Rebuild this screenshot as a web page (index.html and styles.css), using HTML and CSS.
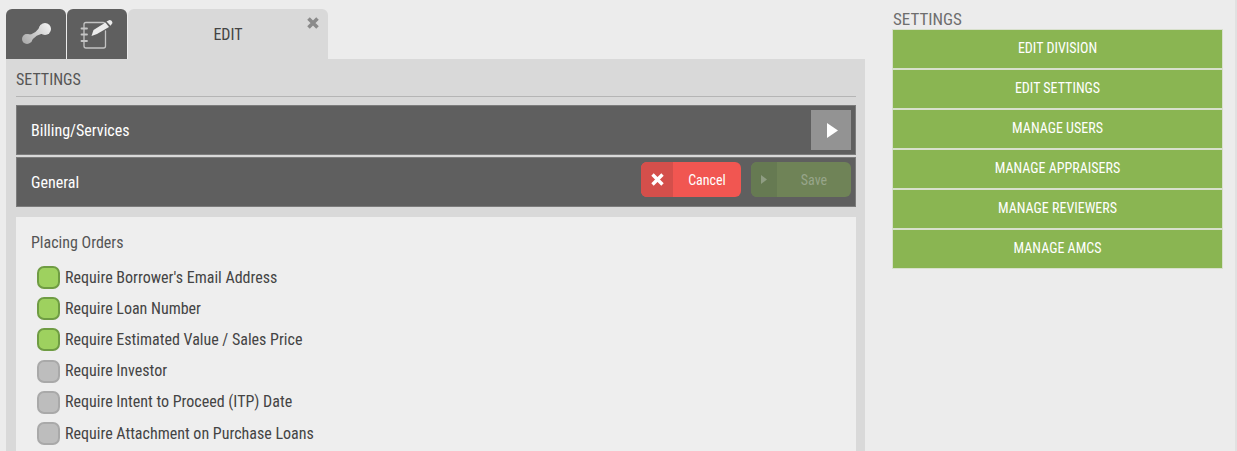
FILE: index.html
```html
<!DOCTYPE html>
<html lang="en">
<head>
<meta charset="utf-8">
<title>Settings</title>
<link rel="stylesheet" href="styles.css">
</head>
<body>
<div class="page">
  <main class="main">
    <div class="tabs">
      <div class="tab tab-icon">
        <svg width="36" height="24" viewBox="0 0 36 24"><defs><linearGradient id="link" gradientUnits="userSpaceOnUse" x1="5" y1="22" x2="32" y2="2"><stop offset="0" stop-color="#a8a8a8"/><stop offset="1" stop-color="#f2f2f2"/></linearGradient></defs><g fill="url(#link)"><circle cx="9" cy="17" r="5"/><circle cx="27" cy="7" r="6"/><path d="M6.500 12.700Q18 14 22.500 3L31 11.500Q17 10.500 13 20.500z"/></g></svg>
      </div>
      <div class="tab tab-icon">
        <svg width="36" height="36" viewBox="0 0 36 36" fill="none" stroke="#c4c4c4" stroke-width="1.300" stroke-linecap="round"><path d="M26 9V8.500a2 2 0 0 0-2-2H7a2 2 0 0 0-2 2V30a2 2 0 0 0 2 2h17.500a2 2 0 0 0 2-2V15"/><path d="M2.500 12.500h5.500M2.500 18.500h5.500M2.500 25h5.500" stroke-width="1.800"/><path d="M12.500 20l2-6 12-7.500 3.500 4.500-12 7z" fill="#ececec" stroke="none"/><path d="M27.500 5.500l3-1.500q2.500 0 3 3l-2 2.800z" fill="#ececec" stroke="none"/></svg>
      </div>
      <div class="tab tab-active">
        <span>EDIT</span>
        <svg class="tab-close" width="14" height="14" viewBox="0 0 14 14"><path d="M2.500 2.500l9 9M11.500 2.500l-9 9" stroke="#8a8a8a" stroke-width="3.600" fill="none"/></svg>
      </div>
    </div>
    <section class="panel">
      <h2 class="panel-title">SETTINGS</h2>
      <div class="bar bar-first">
        <span class="bar-label">Billing/Services</span>
        <button class="play" type="button"><svg width="11" height="15" viewBox="0 0 11 15"><path d="M0 0l11 7.500-11 7.500z" fill="#fff"/></svg></button>
      </div>
      <div class="bar">
        <span class="bar-label">General</span>
        <div class="bar-actions">
          <div class="btn btn-cancel">
            <span class="btn-icon"><svg width="13" height="13" viewBox="0 0 13 13"><path d="M1.500 1.500l10 10M11.500 1.500l-10 10" stroke="#fff" stroke-width="3.400" fill="none"/></svg></span>
            <span class="btn-text">Cancel</span>
          </div>
          <div class="btn btn-save">
            <span class="btn-icon"><svg width="6" height="9" viewBox="0 0 6 9"><path d="M0 0l6 4.500-6 4.500z" fill="#8f9d83"/></svg></span>
            <span class="btn-text">Save</span>
          </div>
        </div>
      </div>
      <div class="card">
        <h3 class="card-title">Placing Orders</h3>
        <ul class="checks">
          <li class="check on"><span class="box"></span>Require Borrower's Email Address</li>
          <li class="check on"><span class="box"></span>Require Loan Number</li>
          <li class="check on"><span class="box"></span>Require Estimated Value / Sales Price</li>
          <li class="check"><span class="box"></span>Require Investor</li>
          <li class="check"><span class="box"></span>Require Intent to Proceed (ITP) Date</li>
          <li class="check"><span class="box"></span>Require Attachment on Purchase Loans</li>
        </ul>
      </div>
    </section>
  </main>
  <aside class="side">
    <h2 class="side-title">SETTINGS</h2>
    <a class="side-btn">EDIT DIVISION</a>
    <a class="side-btn">EDIT SETTINGS</a>
    <a class="side-btn">MANAGE USERS</a>
    <a class="side-btn">MANAGE APPRAISERS</a>
    <a class="side-btn">MANAGE REVIEWERS</a>
    <a class="side-btn">MANAGE AMCS</a>
  </aside>
</div>
</body>
</html>
```
FILE: styles.css
```css
* { box-sizing: border-box; }
html, body { margin: 0; height: 451px; overflow: hidden; }
html { border-right: 2px solid #e1e1e1; }
body { background: #ececec; font-family: "Roboto Condensed", Roboto, sans-serif; font-stretch: 75%; color: #555; }
.page { display: flex; align-items: flex-start; padding: 9px 0 0 6px; height: 451px; overflow: hidden; }
.main { width: 859px; flex: none; }
.tabs { display: flex; height: 50px; gap: 1px; }
.tab { border-radius: 6px 6px 0 0; display: flex; align-items: center; justify-content: center; }
.tab-icon { width: 60px; background: #5f5f5f; }
.tab-active { width: 200px; background: #d9d9d9; position: relative; font-size: 16px; color: #444; }
.tab-close { position: absolute; top: 7px; right: 8px; }
.panel { background: #d9d9d9; padding: 11px 9px 0 10px; height: 392px; }
.panel-title { margin: 0; font-weight: 400; font-size: 16px; line-height: 20px; height: 27px; border-bottom: 1px solid #b5b5b5; color: #555; }
.bar { height: 50px; background: #5f5f5f; border: 1px solid #7c7c7c; display: flex; align-items: center; justify-content: space-between; padding: 0 4px 0 14px; margin-top: 2px; color: #fff; }
.bar-first { margin-top: 8px; }
.bar-label { font-size: 16px; font-weight: 400; }
.play { width: 40px; height: 40px; border: 0; padding: 0 0 0 2px; background: #939393; display: flex; align-items: center; justify-content: center; }
.bar-actions { display: flex; gap: 10px; margin-bottom: 5px; }
.btn { display: flex; height: 35px; border-radius: 6px; overflow: hidden; font-size: 14px; font-weight: 400; }
.btn-icon { width: 32px; display: flex; align-items: center; justify-content: center; }
.btn-text { flex: 1; display: flex; align-items: center; justify-content: center; }
.btn-cancel { width: 100px; background: #f15651; color: #fff; }
.btn-cancel .btn-icon { background: #d44f4b; }
.btn-save { width: 100px; background: #6f8357; color: #97a58a; }
.btn-save .btn-icon { width: 26px; background: #667a52; }
.card { background: #eeeeee; margin-top: 10px; padding: 16px 15px 0; height: 300px; }
.card-title { margin: 0 0 8.500px; font-weight: 400; font-size: 16px; line-height: 20px; color: #555; }
.checks { list-style: none; margin: 0; padding: 0 0 0 6px; }
.check { display: flex; align-items: center; gap: 5px; height: 31.2px; font-size: 16px; color: #444; }
.box { width: 23px; height: 23px; margin-top: 1px; border-radius: 7px; background: #bdbdbd; border: 2px solid #a9a9a9; flex: none; }
.on .box { background: #9ed15f; border-color: #6f9c43; }
.side { width: 329px; margin-left: 28px; flex: none; }
.side-title { margin: 0; font-weight: 400; font-size: 17px; line-height: 21px; color: #6e6e6e; }
.side-btn { display: flex; align-items: center; justify-content: center; height: 38px; padding-bottom: 2px; margin-bottom: 2px; background: #8ab552; box-shadow: 0 0 0 1px rgba(138, 181, 82, .2); color: #fff; font-size: 14px; font-weight: 400; }
```
